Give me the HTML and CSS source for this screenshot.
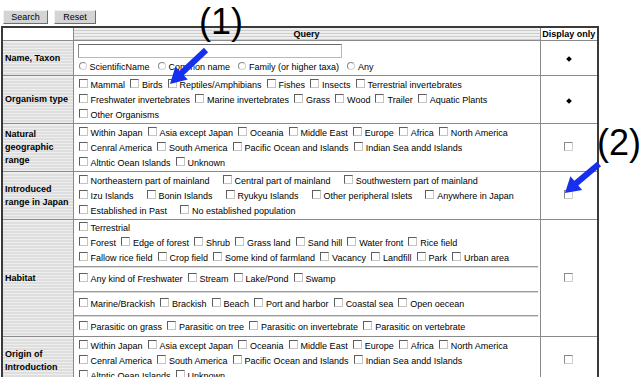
FILE: index.html
```html
<!DOCTYPE html>
<html lang="en">
<head>
    <meta charset="UTF-8">
    <title>Search</title>
    <link rel="stylesheet" href="styles.css">
</head>
<body>

<div class="toolbar">
    <button class="btn btn-search">Search</button>
    <button class="btn btn-reset">Reset</button>
</div>

<table class="query-table">
    <colgroup>
        <col class="col-name">
        <col class="col-query">
        <col class="col-display">
    </colgroup>
    <thead>
        <tr>
            <th class="plain"></th>
            <th class="stripe">Query</th>
            <th class="plain">Display only</th>
        </tr>
    </thead>
    <tbody>
        <tr class="row-name">
            <td class="stripe label">Name, Taxon</td>
            <td class="query">
                <input type="text" class="text-box">
                <div class="line radios">
                    <label><input type="radio" name="nt">ScientificName</label>
                    <label><input type="radio" name="nt">Common name</label>
                    <label><input type="radio" name="nt">Family (or higher taxa)</label>
                    <label><input type="radio" name="nt">Any</label>
                </div>
            </td>
            <td class="display"><span class="diamond"></span></td>
        </tr>
        <tr>
            <td class="stripe label">Organism type</td>
            <td class="query">
                <div class="line">
                    <label><input type="checkbox">Mammal</label>
                    <label><input type="checkbox">Birds</label>
                    <label><input type="checkbox">Reptiles/Amphibians</label>
                    <label><input type="checkbox">Fishes</label>
                    <label><input type="checkbox">Insects</label>
                    <label><input type="checkbox">Terrestrial invertebrates</label>
                </div>
                <div class="line">
                    <label><input type="checkbox">Freshwater invertebrates</label>
                    <label><input type="checkbox">Marine invertebrates</label>
                    <label><input type="checkbox">Grass</label>
                    <label><input type="checkbox">Wood</label>
                    <label><input type="checkbox">Trailer</label>
                    <label><input type="checkbox">Aquatic Plants</label>
                </div>
                <div class="line">
                    <label><input type="checkbox">Other Organisms</label>
                </div>
            </td>
            <td class="display"><span class="diamond"></span></td>
        </tr>
        <tr>
            <td class="stripe label">Natural geographic range</td>
            <td class="query">
                <div class="line">
                    <label><input type="checkbox">Within Japan</label>
                    <label><input type="checkbox">Asia except Japan</label>
                    <label><input type="checkbox">Oceania</label>
                    <label><input type="checkbox">Middle East</label>
                    <label><input type="checkbox">Europe</label>
                    <label><input type="checkbox">Africa</label>
                    <label><input type="checkbox">North America</label>
                </div>
                <div class="line">
                    <label><input type="checkbox">Cenral America</label>
                    <label><input type="checkbox">South America</label>
                    <label><input type="checkbox">Pacific Ocean and Islands</label>
                    <label><input type="checkbox">Indian Sea andd Islands</label>
                </div>
                <div class="line">
                    <label><input type="checkbox">Altntic Oean Islands</label>
                    <label><input type="checkbox">Unknown</label>
                </div>
            </td>
            <td class="display"><input type="checkbox" class="show"></td>
        </tr>
        <tr>
            <td class="stripe label">Introduced range in Japan</td>
            <td class="query">
                <div class="line wide">
                    <label><input type="checkbox">Northeastern part of mainland</label>
                    <label><input type="checkbox">Central part of mainland</label>
                    <label><input type="checkbox">Southwestern part of mainland</label>
                </div>
                <div class="line wide">
                    <label><input type="checkbox">Izu Islands</label>
                    <label><input type="checkbox">Bonin Islands</label>
                    <label><input type="checkbox">Ryukyu Islands</label>
                    <label><input type="checkbox">Other peripheral Islets</label>
                    <label><input type="checkbox">Anywhere in Japan</label>
                </div>
                <div class="line wide">
                    <label><input type="checkbox">Established in Past</label>
                    <label><input type="checkbox">No established population</label>
                </div>
            </td>
            <td class="display"><input type="checkbox" class="show"></td>
        </tr>
        <tr>
            <td class="stripe label">Habitat</td>
            <td class="query habitat">
                <div class="sub sub-land">
                    <div class="line">
                        <label><input type="checkbox">Terrestrial</label>
                    </div>
                    <div class="line">
                        <label><input type="checkbox">Forest</label>
                        <label><input type="checkbox">Edge of forest</label>
                        <label><input type="checkbox">Shrub</label>
                        <label><input type="checkbox">Grass land</label>
                        <label><input type="checkbox">Sand hill</label>
                        <label><input type="checkbox">Water front</label>
                        <label><input type="checkbox">Rice field</label>
                    </div>
                    <div class="line">
                        <label><input type="checkbox">Fallow rice field</label>
                        <label><input type="checkbox">Crop field</label>
                        <label><input type="checkbox">Some kind of farmland</label>
                        <label><input type="checkbox">Vacancy</label>
                        <label><input type="checkbox">Landfill</label>
                        <label><input type="checkbox">Park</label>
                        <label><input type="checkbox">Urban area</label>
                    </div>
                </div>
                <div class="sub sub-fresh">
                    <div class="line">
                        <label><input type="checkbox">Any kind of Freshwater</label>
                        <label><input type="checkbox">Stream</label>
                        <label><input type="checkbox">Lake/Pond</label>
                        <label><input type="checkbox">Swamp</label>
                    </div>
                </div>
                <div class="sub sub-marine">
                    <div class="line">
                        <label><input type="checkbox">Marine/Brackish</label>
                        <label><input type="checkbox">Brackish</label>
                        <label><input type="checkbox">Beach</label>
                        <label><input type="checkbox">Port and harbor</label>
                        <label><input type="checkbox">Coastal sea</label>
                        <label><input type="checkbox">Open oecean</label>
                    </div>
                </div>
                <div class="sub sub-parasite">
                    <div class="line">
                        <label><input type="checkbox">Parasitic on grass</label>
                        <label><input type="checkbox">Parasitic on tree</label>
                        <label><input type="checkbox">Parasitic on invertebrate</label>
                        <label><input type="checkbox">Parasitic on vertebrate</label>
                    </div>
                </div>
            </td>
            <td class="display"><input type="checkbox" class="show"></td>
        </tr>
        <tr>
            <td class="stripe label">Origin of Introduction</td>
            <td class="query">
                <div class="line">
                    <label><input type="checkbox">Within Japan</label>
                    <label><input type="checkbox">Asia except Japan</label>
                    <label><input type="checkbox">Oceania</label>
                    <label><input type="checkbox">Middle East</label>
                    <label><input type="checkbox">Europe</label>
                    <label><input type="checkbox">Africa</label>
                    <label><input type="checkbox">North America</label>
                </div>
                <div class="line">
                    <label><input type="checkbox">Cenral America</label>
                    <label><input type="checkbox">South America</label>
                    <label><input type="checkbox">Pacific Ocean and Islands</label>
                    <label><input type="checkbox">Indian Sea andd Islands</label>
                </div>
                <div class="line">
                    <label><input type="checkbox">Altntic Oean Islands</label>
                    <label><input type="checkbox">Unknown</label>
                </div>
            </td>
            <td class="display"><input type="checkbox" class="show"></td>
        </tr>
    </tbody>
</table>

<!-- callouts drawn over the form -->
<div class="callout callout-1">(1)</div>
<div class="callout callout-2">(2)</div>
<svg class="arrows" width="640" height="377" viewBox="0 0 640 377">
    <polygon points="208.1,52.2 183.7,75.2 187.8,79.5 170,84 175.4,66.5 179.5,70.8 203.9,47.8" fill="#1630ee"/>
    <polygon points="601,166.3 578.3,185.4 582.2,189.9 565,193 570.4,176.3 574.3,180.8 597,161.7" fill="#1630ee"/>
</svg>

</body>
</html>
```

FILE: styles.css
```css
body {
    font-family: 'Liberation Sans', Arial, sans-serif;
    font-size: 9px;
    color: #000;
    margin: 0;
    background-color: #fff;
    position: relative;
    height: 377px;
    overflow: hidden;
}

.toolbar {
    display: flex;
    gap: 6px;
    padding: 10px 0 0 3px;
    height: 14px;
    margin-bottom: 2px;
}

.btn {
    font-family: 'Liberation Sans', Arial, sans-serif;
    font-size: 9px;
    color: #000;
    height: 14px;
    padding: 0;
    background-color: #d4d4d4;
    border: 1px solid;
    border-color: #f2f2f2 #6e6e6e #6e6e6e #f2f2f2;
}

.btn-search {
    width: 45px;
}

.btn-reset {
    width: 42px;
}

.query-table {
    border-collapse: collapse;
    table-layout: fixed;
    width: 598px;
    margin-left: 1px;
    border: 2px solid #3a3a3a;
}

.col-name {
    width: 71px;
}

.col-display {
    width: 58px;
}

th, td {
    border: 1px solid #8a8a8a;
    padding: 0;
}

th {
    height: 12px;
    line-height: 12px;
    font-weight: bold;
    text-align: center;
}

.plain {
    background-color: #fff;
}

.stripe {
    background: repeating-linear-gradient(to bottom, #eeeeee 0, #eeeeee 2px, #cdcdcd 2px, #cdcdcd 3px);
}

.label {
    font-weight: bold;
    line-height: 13px;
    padding-left: 2px;
    vertical-align: middle;
}

.query {
    padding: 1px 0 1px 5px;
    vertical-align: top;
}

.row-name .query {
    padding-top: 3px;
    padding-bottom: 1px;
}

.text-box {
    display: block;
    box-sizing: border-box;
    width: 264px;
    height: 14px;
    margin: 0 0 1px -1px;
    border: 1px solid;
    border-color: #6a6a6a #b8b8b8 #b8b8b8 #8a8a8a;
}

.line {
    display: flex;
    align-items: center;
    height: 15px;
    white-space: nowrap;
}

.line label {
    display: flex;
    align-items: center;
    margin-right: 5px;
}

.line.wide label {
    margin-right: 13px;
}

.radios label {
    margin-right: 8px;
}

input[type="checkbox"], input[type="radio"] {
    appearance: none;
    -webkit-appearance: none;
    box-sizing: border-box;
    width: 9px;
    height: 9px;
    margin: 0 3px 2px 0;
    background-color: #fff;
    border: 1px solid;
    border-color: #5e5e5e #c4c4c4 #c4c4c4 #5e5e5e;
}

input[type="radio"] {
    width: 8px;
    height: 8px;
    border-radius: 50%;
    border-color: #8a8a8a #d0d0d0 #d0d0d0 #8a8a8a;
}

.habitat {
    padding: 0;
}

.sub {
    padding-left: 5px;
    margin-right: 2px;
    border-bottom: 1px solid #9a9a9a;
    box-shadow: 0 1px 0 #d8d8d8;
}

.sub-land {
    padding-bottom: 1px;
}

.sub-fresh {
    padding: 4px 0 5px 5px;
}

.sub-marine {
    padding: 4px 0 4px 5px;
}

.sub-parasite {
    padding: 3px 0 2px 5px;
    border-bottom: none;
    box-shadow: none;
}

.display {
    text-align: center;
    vertical-align: middle;
}

.display .show {
    margin: 0;
    border-color: #8a8a8a #cfcfcf #cfcfcf #8a8a8a;
}

.diamond {
    display: inline-block;
    width: 4px;
    height: 4px;
    background-color: #000;
    transform: rotate(45deg);
}

.callout {
    position: absolute;
    font-family: 'Liberation Sans', Arial, sans-serif;
    font-size: 36px;
    line-height: 36px;
    color: #000;
}

.callout-1 {
    left: 199px;
    top: 4px;
}

.callout-2 {
    left: 597px;
    top: 125px;
}

.arrows {
    position: absolute;
    left: 0;
    top: 0;
    pointer-events: none;
}
```
